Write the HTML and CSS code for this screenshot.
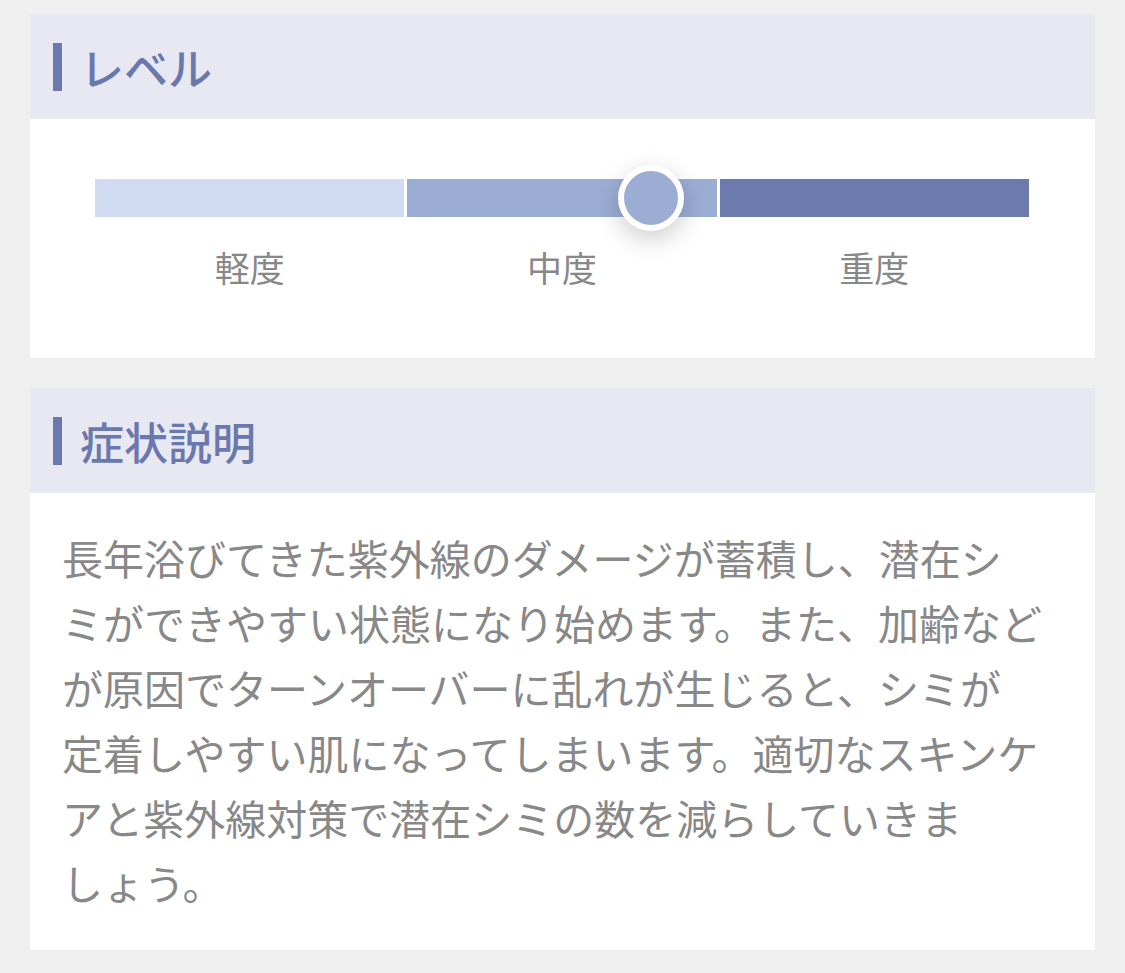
FILE: index.html
```html
<!DOCTYPE html>
<html lang="ja">
<head>
  <meta charset="UTF-8">
  <meta name="viewport" content="width=device-width, initial-scale=1.0">
  <title>レベル</title>
  <link rel="stylesheet" href="styles.css">
</head>
<body>
  <div class="page">

    <section class="card">
      <h2 class="card-title">レベル</h2>
      <div class="level-body">
        <div class="level-bar">
          <div class="seg seg-light"></div>
          <div class="seg seg-mid"></div>
          <div class="seg seg-dark"></div>
          <div class="knob" style="left: 59.5%;"></div>
        </div>
        <div class="level-labels">
          <span>軽度</span>
          <span>中度</span>
          <span>重度</span>
        </div>
      </div>
    </section>

    <section class="card">
      <h2 class="card-title">症状説明</h2>
      <p class="description">長年浴びてきた紫外線のダメージが蓄積し、潜在シ<br>ミができやすい状態になり始めます。また、加齢など<br>が原因でターンオーバーに乱れが生じると、シミが<br>定着しやすい肌になってしまいます。適切なスキンケ<br>アと紫外線対策で潜在シミの数を減らしていきま<br>しょう。</p>
    </section>

  </div>
</body>
</html>
```

FILE: styles.css
```css
  body {
    margin: 0;
    background-color: #efefef;
    font-family: "Noto Sans CJK JP", "Noto Sans", sans-serif;
  }

  .page {
    padding: 14px 30px 23px;
    display: flex;
    flex-direction: column;
    gap: 30px;
  }

  .card {
    background-color: #fff;
  }

  .card-title {
    margin: 0;
    height: 105px;
    display: flex;
    align-items: center;
    gap: 18px;
    padding-left: 23px;
    background-color: #e7e8f1;
    color: #6b78ad;
    font-size: 44px;
    font-weight: 500;
  }

  .card-title::before {
    content: "";
    width: 9px;
    height: 48px;
    background-color: #6b78ad;
  }

  .level-body {
    padding: 60px 66px 65px 65px;
  }

  .level-bar {
    position: relative;
    display: grid;
    grid-template-columns: 1fr 1fr 1fr;
    gap: 3px;
    height: 38px;
  }

  .seg-light { background-color: #d1dcf2; }
  .seg-mid { background-color: #9cadd4; }
  .seg-dark { background-color: #6d7aae; }

  .knob {
    position: absolute;
    top: 50%;
    width: 54px;
    height: 54px;
    border: 6px solid #fff;
    border-radius: 50%;
    background-color: #9cadd4;
    transform: translate(-50%, -50%);
    box-shadow: 0 8px 26px rgba(0, 0, 0, 0.2);
  }

  .level-labels {
    display: grid;
    grid-template-columns: 1fr 1fr 1fr;
    gap: 3px;
    margin-top: 24px;
    text-align: center;
    color: #888;
    font-size: 35px;
    line-height: 52px;
  }

  .description {
    margin: 0;
    padding: 32px 30px 35px 32px;
    color: #888;
    font-size: 41px;
    line-height: 65px;
  }
```
